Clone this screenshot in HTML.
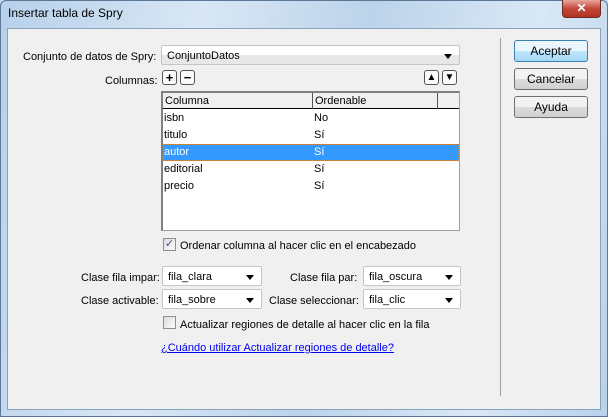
<!DOCTYPE html>
<html><head><meta charset="utf-8"><style>
*{box-sizing:border-box;margin:0;padding:0}
body{width:608px;height:417px;overflow:hidden;font-family:"Liberation Sans",sans-serif;font-size:11px;color:#000;background:#c9dcee;position:relative}
.frame{position:absolute;left:0;top:0;width:608px;height:417px;background:linear-gradient(100deg,#b7d0ea 0%,#d8e7f5 30%,#bcd3ea 55%,#d9e8f6 80%,#b9d1ea 100%);border:1px solid #5b7896;border-radius:6px 6px 0 0}
.title{position:absolute;left:8px;top:6px;font-size:12px;color:#000}
.close{position:absolute;left:562px;top:0;width:39px;height:18px;border:1px solid #6b2a22;border-top:none;border-radius:0 0 4px 4px;background:linear-gradient(#e8a79a,#c2493a 50%,#b33222);color:#fff;text-align:center;font-weight:bold;font-size:12px;line-height:17px}
.client{position:absolute;left:7px;top:28px;width:594px;height:382px;background:#f0f0f0;border:1px solid #8aa3bd}
.a{position:absolute;white-space:nowrap}
.sel{position:absolute;background:#fff;border:1px solid #c5c5c5;border-radius:2px;height:20px;padding:3px 5px;line-height:14px}
.sel:after{content:"";position:absolute;right:7px;top:8px;border:4px solid transparent;border-top:5px solid #000;border-bottom:none}
.btn{position:absolute;left:514px;width:74px;height:22px;border:1px solid #707070;border-radius:3px;background:linear-gradient(#f2f2f2 50%,#dcdcdc 50%,#d0d0d0);text-align:center;line-height:20px;font-size:12px}
.sb{position:absolute;width:15px;height:15px;border:1px solid #555;border-radius:3px;background:#fafafa;text-align:center;font-weight:bold;line-height:13px;font-size:13px}
.cb{position:absolute;width:13px;height:13px;border:1px solid #8f8f8f;background:linear-gradient(135deg,#dcdcdc,#fbfbfb)}
</style></head><body>
<div class="frame"></div>
<div class="title">Insertar tabla de Spry</div>
<div class="close">✕</div>
<div class="client"></div>
<div class="a" style="left:500px;top:38px;width:1px;height:358px;background:#a0a0a0"></div>

<div class="a" style="left:23px;top:51px">Conjunto de datos de Spry:</div>
<div class="sel" style="left:161px;top:45px;width:299px;background:linear-gradient(#fff 50%,#e8e8e8 50%)">ConjuntoDatos</div>

<div class="a" style="left:105px;top:75px">Columnas:</div>
<div class="sb" style="left:162px;top:70px">+</div>
<div class="sb" style="left:180px;top:70px">−</div>
<div class="sb" style="left:424px;top:70px;font-size:10px;line-height:14px">▲</div>
<div class="sb" style="left:442px;top:70px;font-size:10px;line-height:14px">▼</div>

<div class="a" style="left:161px;top:91px;width:299px;height:140px;background:#fff;border:1px solid #a0a0a0;border-left:2px solid #808080;border-top:2px solid #808080"></div>
<div class="a" style="left:163px;top:93px;width:296px;height:16px;background:#f0f0f0;border-bottom:1px solid #000"></div>
<div class="a" style="left:312px;top:93px;width:1px;height:16px;background:#555"></div>
<div class="a" style="left:437px;top:93px;width:1px;height:16px;background:#555"></div>
<div class="a" style="left:165px;top:95px">Columna</div>
<div class="a" style="left:315px;top:95px">Ordenable</div>
<div class="a" style="left:163px;top:144px;width:296px;height:17px;background:#3399ff;border:1px dotted #d08a40"></div>
<div class="a" style="left:164px;top:112px">isbn</div><div class="a" style="left:314px;top:112px">No</div>
<div class="a" style="left:164px;top:129px">titulo</div><div class="a" style="left:314px;top:129px">Sí</div>
<div class="a" style="left:164px;top:146px;color:#fff">autor</div><div class="a" style="left:314px;top:146px;color:#fff">Sí</div>
<div class="a" style="left:164px;top:163px">editorial</div><div class="a" style="left:314px;top:163px">Sí</div>
<div class="a" style="left:164px;top:180px">precio</div><div class="a" style="left:314px;top:180px">Sí</div>

<div class="cb" style="left:163px;top:238px;color:#3b4fa0;font-size:11px;line-height:11px;text-align:center">✓</div>
<div class="a" style="left:180px;top:240px">Ordenar columna al hacer clic en el encabezado</div>

<div class="a" style="left:81px;top:272px">Clase fila impar:</div>
<div class="sel" style="left:162px;top:266px;width:100px">fila_clara</div>
<div class="a" style="left:290px;top:272px">Clase fila par:</div>
<div class="sel" style="left:363px;top:266px;width:98px">fila_oscura</div>
<div class="a" style="left:81px;top:295px">Clase activable:</div>
<div class="sel" style="left:162px;top:289px;width:100px">fila_sobre</div>
<div class="a" style="left:269px;top:295px">Clase seleccionar:</div>
<div class="sel" style="left:363px;top:289px;width:98px">fila_clic</div>

<div class="cb" style="left:163px;top:316px"></div>
<div class="a" style="left:180px;top:319px">Actualizar regiones de detalle al hacer clic en la fila</div>
<div class="a" style="left:161px;top:342px;color:#0000ee;text-decoration:underline">¿Cuándo utilizar Actualizar regiones de detalle?</div>

<div class="btn" style="top:40px;border-color:#3c7fb1;background:linear-gradient(#eaf6fd 50%,#bee6fd 50%,#a7d9f5)">Aceptar</div>
<div class="btn" style="top:68px">Cancelar</div>
<div class="btn" style="top:96px">Ayuda</div>
</body></html>
